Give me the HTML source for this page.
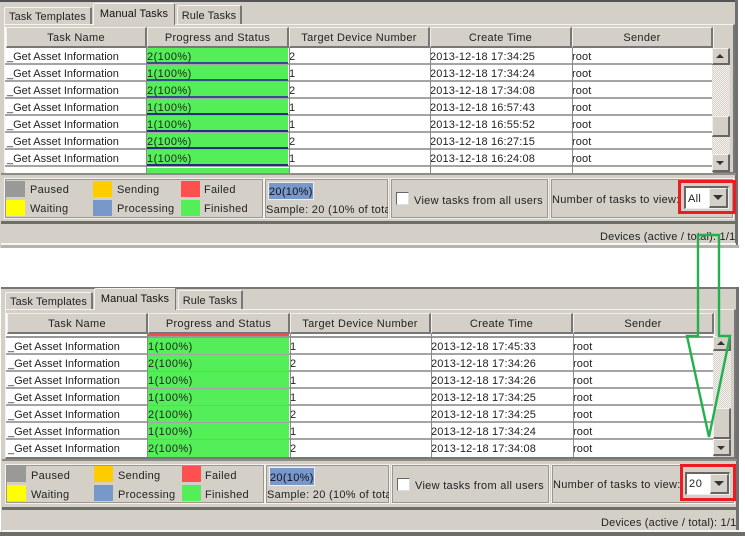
<!DOCTYPE html>
<html>
<head>
<meta charset="utf-8">
<style>
html,body{margin:0;padding:0;background:#fff}
#s{position:relative;width:745px;height:536px;overflow:hidden;background:#fff;font:11px/14px "Liberation Sans",sans-serif;color:#222;letter-spacing:.3px;filter:blur(.3px)}
#s div{position:absolute;box-sizing:border-box;white-space:nowrap}
.bg{background:#d4d0c8}
.tab{background:#d4d0c8;border:1px solid #f4f2ee;border-bottom:0;border-right:2px solid #777;text-align:center;border-radius:2px 2px 0 0;letter-spacing:.1px}
.h{background:#d4d0c8;border:1px solid #f2f0ea;border-right:2px solid #777;border-bottom:2px solid #777;text-align:center;height:21px;line-height:21px;top:0}
.r{left:0;width:707px;height:17px;line-height:19px;background:#fff;border-bottom:2px solid #a4a4a4}
.c1{left:2px;letter-spacing:0}.c2{left:142px;width:141px;height:16px;background:#54ef58;line-height:19px;letter-spacing:.45px}
.c3{left:284px}.c4{left:425px;letter-spacing:.15px}.c5{left:567px;letter-spacing:.1px}
.v{width:2px;background:#8a8a8a}
.sw{width:19px;height:16px}
.fr{border:1px solid #f4f2ee;outline:1px solid #9a9790;outline-offset:-2px}
.btn{background:#d4d0c8;border:1px solid #f2f0ea;border-right:2px solid #666;border-bottom:2px solid #666}
.tri{width:0;height:0;border-left:4px solid transparent;border-right:4px solid transparent}
.track{background:repeating-conic-gradient(#d4d0c8 0 25%,#f4f3f0 0 50%) 0 0/2px 2px}
.up{border-bottom:4px solid #333}
.dn{border-top:4px solid #333}
.cb{border-left:5px solid transparent;border-right:5px solid transparent;border-top:5px solid #333}
</style>
</head>
<body>
<div id="s">

<!-- TOP PANEL -->
<div class="bg" style="left:0;top:0;width:738px;height:249px;border-right:3px solid #707070"></div>
<div style="left:0;top:0;width:735px;height:2px;background:#555"></div>
<div class="tab" style="left:4px;top:7px;width:88px;height:17px;line-height:18px">Task Templates</div>
<div class="tab" style="left:93px;top:3px;width:82px;height:22px;line-height:21px;border-right-width:1px;z-index:2;color:#111">Manual Tasks</div>
<div class="tab" style="left:177px;top:5px;width:65px;height:19px;line-height:21px">Rule Tasks</div>
<div style="left:4px;top:24px;width:731px;height:150px;border:1px solid #f4f2ee;border-right:2px solid #777;border-bottom:2px solid #777"></div>

<div style="left:5px;top:27px;width:708px;height:146px;background:#fff">
  <div class="h" style="left:1px;width:141px">Task Name</div>
  <div class="h" style="left:142px;width:142px">Progress and Status</div>
  <div class="h" style="left:284px;width:141px">Target Device Number</div>
  <div class="h" style="left:425px;width:142px">Create Time</div>
  <div class="h" style="left:567px;width:141px">Sender</div>
  <div class="r" style="top:21px"><div class="c1">_Get Asset Information</div><div class="c2" style="border-bottom:2px solid #34508c">2(100%)</div><div class="c3">2</div><div class="c4">2013-12-18 17:34:25</div><div class="c5">root</div></div>
  <div class="r" style="top:38px"><div class="c1">_Get Asset Information</div><div class="c2" style="border-bottom:2px solid #34508c">1(100%)</div><div class="c3">1</div><div class="c4">2013-12-18 17:34:24</div><div class="c5">root</div></div>
  <div class="r" style="top:55px"><div class="c1">_Get Asset Information</div><div class="c2" style="border-bottom:2px solid #34508c">2(100%)</div><div class="c3">2</div><div class="c4">2013-12-18 17:34:08</div><div class="c5">root</div></div>
  <div class="r" style="top:72px"><div class="c1">_Get Asset Information</div><div class="c2" style="border-bottom:2px solid #25307c">1(100%)</div><div class="c3">1</div><div class="c4">2013-12-18 16:57:43</div><div class="c5">root</div></div>
  <div class="r" style="top:89px"><div class="c1">_Get Asset Information</div><div class="c2" style="border-bottom:2px solid #25307c">1(100%)</div><div class="c3">1</div><div class="c4">2013-12-18 16:55:52</div><div class="c5">root</div></div>
  <div class="r" style="top:106px"><div class="c1">_Get Asset Information</div><div class="c2" style="border-bottom:2px solid #25307c">2(100%)</div><div class="c3">2</div><div class="c4">2013-12-18 16:27:15</div><div class="c5">root</div></div>
  <div class="r" style="top:123px"><div class="c1">_Get Asset Information</div><div class="c2" style="border-bottom:2px solid #25307c">1(100%)</div><div class="c3">1</div><div class="c4">2013-12-18 16:24:08</div><div class="c5">root</div></div>
  <div style="left:142px;top:141px;width:142px;height:5px;background:#54ef58"></div>
  <div class="v" style="left:141px;top:21px;height:125px;width:1px"></div>
  <div class="v" style="left:284px;top:21px;height:125px;width:1px"></div>
  <div class="v" style="left:425px;top:21px;height:125px;width:1px"></div>
  <div class="v" style="left:567px;top:21px;height:125px;width:1px"></div>
</div>

<!-- top scrollbar -->
<div class="bg" style="left:713px;top:27px;width:18px;height:21px;border-left:1px solid #f2f0ea"></div>
<div class="track" style="left:712px;top:48px;width:18px;height:124px"></div>
<div class="btn" style="left:712px;top:48px;width:18px;height:17px"><div class="tri up" style="left:3px;top:5px"></div></div>
<div class="btn" style="left:712px;top:116px;width:18px;height:21px"></div>
<div class="btn" style="left:712px;top:154px;width:18px;height:18px"><div class="tri dn" style="left:3px;top:6px"></div></div>

<!-- top footer -->
<div style="left:1px;top:173px;width:735px;height:2px;background:#8f8c86"></div>
<div class="fr" style="left:4px;top:178px;width:260px;height:41px"></div>
<div class="sw" style="left:6px;top:181px;background:#999"></div>
<div class="sw" style="left:6px;top:200px;background:#ff0"></div>
<div class="sw" style="left:93px;top:181px;background:#fc0"></div>
<div class="sw" style="left:93px;top:200px;background:#7798c8"></div>
<div class="sw" style="left:181px;top:181px;background:#ff5050"></div>
<div class="sw" style="left:181px;top:200px;background:#54ef58"></div>
<div style="left:30px;top:183px">Paused</div>
<div style="left:30px;top:202px">Waiting</div>
<div style="left:117px;top:183px">Sending</div>
<div style="left:117px;top:202px">Processing</div>
<div style="left:204px;top:183px">Failed</div>
<div style="left:204px;top:202px">Finished</div>

<div class="fr" style="left:264px;top:178px;width:125px;height:41px"></div>
<div style="left:268px;top:182px;width:46px;height:18px;background:#7798c8;border:1px solid #f0eeea;line-height:18px;padding-left:0;color:#112">20(10%)</div>
<div style="left:266px;top:203px;width:122px;overflow:hidden">Sample: 20 (10% of total)</div>

<div class="fr" style="left:390px;top:178px;width:159px;height:41px"></div>
<div style="left:396px;top:192px;width:13px;height:13px;background:#fff;border:1px solid #666;border-right-color:#ddd;border-bottom-color:#ddd"></div>
<div style="left:414px;top:194px">View tasks from all users</div>

<div class="fr" style="left:550px;top:178px;width:184px;height:41px"></div>
<div style="left:552px;top:193px">Number of tasks to view:</div>
<div style="left:684px;top:186px;width:45px;height:23px;background:#fff;border:2px solid #666;border-right:1px solid #eee;border-bottom:1px solid #eee;line-height:23px;padding-left:2px">All</div>
<div class="btn" style="left:709px;top:188px;width:19px;height:20px"><div class="tri cb" style="left:3px;top:6px"></div></div>
<div style="left:678px;top:180px;width:58px;height:34px;border:3px solid #ed1c24"></div>

<div style="left:1px;top:221px;width:735px;height:3px;background:#6e6e68"></div>
<div style="left:600px;top:230px;letter-spacing:.2px">Devices (active / total): 1/1</div>
<div style="left:1px;top:243px;width:735px;height:2px;background:#f6f5f2"></div>
<div style="left:1px;top:245px;width:738px;height:3px;background:#b5b3ad"></div>
<div style="left:0;top:248px;width:745px;height:39px;background:#fff"></div>

<!-- BOTTOM PANEL -->
<div class="bg" style="left:1px;top:287px;width:738px;height:249px;border-right:3px solid #707070"></div>
<div style="left:1px;top:287px;width:735px;height:2px;background:#777"></div>
<div class="tab" style="left:5px;top:292px;width:88px;height:17px;line-height:18px">Task Templates</div>
<div class="tab" style="left:94px;top:288px;width:82px;height:22px;line-height:21px;border-right-width:1px;z-index:2;color:#111">Manual Tasks</div>
<div class="tab" style="left:178px;top:290px;width:65px;height:19px;line-height:21px">Rule Tasks</div>
<div style="left:5px;top:309px;width:731px;height:150px;border:1px solid #f4f2ee;border-right:2px solid #777;border-bottom:2px solid #777"></div>

<div style="left:6px;top:313px;width:708px;height:144px;background:#fff">
  <div style="left:142px;top:20px;width:141px;height:4px;background:#f0504c"></div>
  <div class="r" style="top:25px"><div class="c1">_Get Asset Information</div><div class="c2">1(100%)</div><div class="c3">1</div><div class="c4">2013-12-18 17:45:33</div><div class="c5">root</div></div>
  <div class="r" style="top:42px"><div class="c1">_Get Asset Information</div><div class="c2">2(100%)</div><div class="c3">2</div><div class="c4">2013-12-18 17:34:26</div><div class="c5">root</div></div>
  <div class="r" style="top:59px"><div class="c1">_Get Asset Information</div><div class="c2">1(100%)</div><div class="c3">1</div><div class="c4">2013-12-18 17:34:26</div><div class="c5">root</div></div>
  <div class="r" style="top:76px"><div class="c1">_Get Asset Information</div><div class="c2">1(100%)</div><div class="c3">1</div><div class="c4">2013-12-18 17:34:25</div><div class="c5">root</div></div>
  <div class="r" style="top:93px"><div class="c1">_Get Asset Information</div><div class="c2">2(100%)</div><div class="c3">2</div><div class="c4">2013-12-18 17:34:25</div><div class="c5">root</div></div>
  <div class="r" style="top:110px"><div class="c1">_Get Asset Information</div><div class="c2">1(100%)</div><div class="c3">1</div><div class="c4">2013-12-18 17:34:24</div><div class="c5">root</div></div>
  <div class="r" style="top:127px;border-bottom:0"><div class="c1">_Get Asset Information</div><div class="c2" style="height:17px">2(100%)</div><div class="c3">2</div><div class="c4">2013-12-18 17:34:08</div><div class="c5">root</div></div>
  <div style="left:0;top:23px;width:707px;height:2px;background:#999"></div>
  <div class="h" style="left:1px;width:141px">Task Name</div>
  <div class="h" style="left:142px;width:142px">Progress and Status</div>
  <div class="h" style="left:284px;width:141px">Target Device Number</div>
  <div class="h" style="left:425px;width:142px">Create Time</div>
  <div class="h" style="left:567px;width:141px">Sender</div>
  <div class="v" style="left:141px;top:21px;height:123px;width:1px"></div>
  <div class="v" style="left:284px;top:21px;height:123px;width:1px"></div>
  <div class="v" style="left:425px;top:21px;height:123px;width:1px"></div>
  <div class="v" style="left:567px;top:21px;height:123px;width:1px"></div>
</div>

<!-- bottom scrollbar -->
<div class="bg" style="left:714px;top:313px;width:18px;height:25px;border-left:1px solid #f2f0ea"></div>
<div class="track" style="left:713px;top:336px;width:18px;height:120px"></div>
<div class="btn" style="left:713px;top:336px;width:18px;height:15px"><div class="tri up" style="left:3px;top:4px"></div></div>
<div class="btn" style="left:713px;top:408px;width:18px;height:31px"></div>
<div class="btn" style="left:713px;top:439px;width:18px;height:17px"><div class="tri dn" style="left:3px;top:6px"></div></div>

<!-- bottom footer -->
<div style="left:2px;top:459px;width:735px;height:2px;background:#8f8c86"></div>
<div class="fr" style="left:5px;top:464px;width:260px;height:40px"></div>
<div class="sw" style="left:7px;top:466px;background:#999"></div>
<div class="sw" style="left:7px;top:485px;background:#ff0"></div>
<div class="sw" style="left:94px;top:466px;background:#fc0"></div>
<div class="sw" style="left:94px;top:485px;background:#7798c8"></div>
<div class="sw" style="left:182px;top:466px;background:#ff5050"></div>
<div class="sw" style="left:182px;top:485px;background:#54ef58"></div>
<div style="left:31px;top:469px">Paused</div>
<div style="left:31px;top:488px">Waiting</div>
<div style="left:118px;top:469px">Sending</div>
<div style="left:118px;top:488px">Processing</div>
<div style="left:205px;top:469px">Failed</div>
<div style="left:205px;top:488px">Finished</div>

<div class="fr" style="left:265px;top:464px;width:125px;height:40px"></div>
<div style="left:269px;top:467px;width:46px;height:19px;background:#7798c8;border:1px solid #f0eeea;line-height:20px;padding-left:0;color:#112">20(10%)</div>
<div style="left:267px;top:488px;width:122px;overflow:hidden">Sample: 20 (10% of total)</div>

<div class="fr" style="left:391px;top:464px;width:159px;height:40px"></div>
<div style="left:397px;top:478px;width:13px;height:13px;background:#fff;border:1px solid #666;border-right-color:#ddd;border-bottom-color:#ddd"></div>
<div style="left:415px;top:479px">View tasks from all users</div>

<div class="fr" style="left:551px;top:464px;width:184px;height:40px"></div>
<div style="left:553px;top:478px">Number of tasks to view:</div>
<div style="left:685px;top:472px;width:45px;height:23px;background:#fff;border:2px solid #666;border-right:1px solid #eee;border-bottom:1px solid #eee;line-height:21px;padding-left:2px;letter-spacing:.6px">20</div>
<div class="btn" style="left:710px;top:474px;width:19px;height:20px"><div class="tri cb" style="left:3px;top:6px"></div></div>
<div style="left:680px;top:464px;width:56px;height:37px;border:3px solid #ed1c24"></div>

<div style="left:2px;top:507px;width:735px;height:3px;background:#6e6e68"></div>
<div style="left:601px;top:516px;letter-spacing:.2px">Devices (active / total): 1/1</div>
<div style="left:2px;top:530px;width:737px;height:2px;background:#f6f5f2"></div>
<div style="left:0;top:532px;width:745px;height:4px;background:#6e6e68"></div>

<!-- green arrow -->
<svg style="position:absolute;left:0;top:0" width="745" height="536" viewBox="0 0 745 536">
  <path d="M698 235H719V336H730L709 437L687 336H698Z" fill="none" stroke="#22b14c" stroke-width="2.4"/>
</svg>
</div>
</body>
</html>
